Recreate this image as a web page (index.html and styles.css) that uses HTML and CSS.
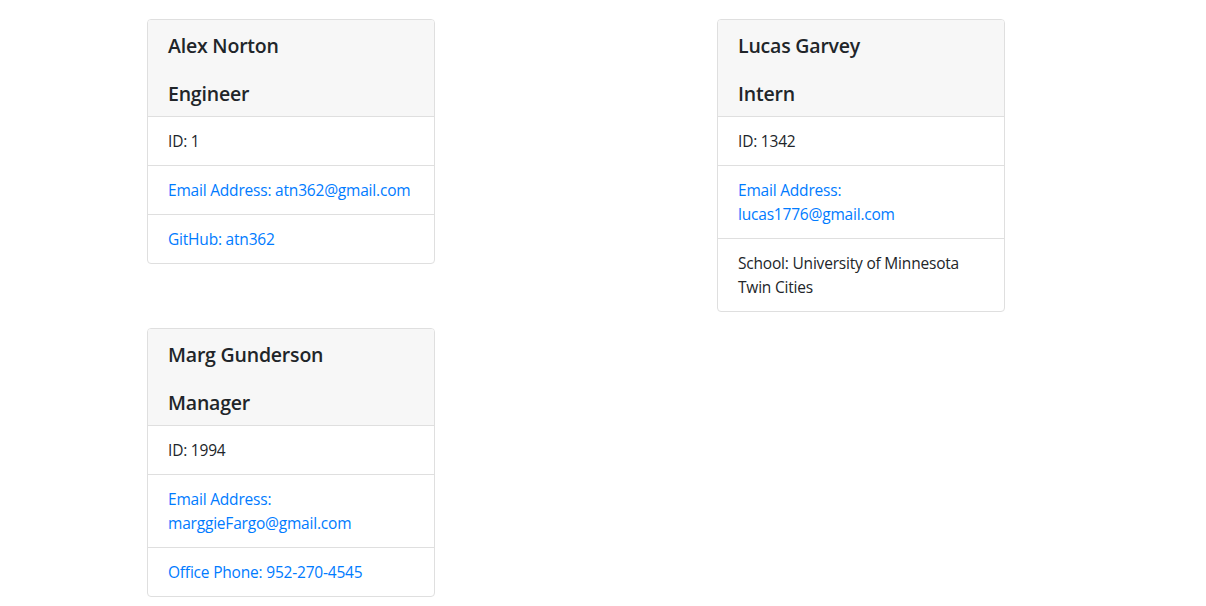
FILE: index.html
```html
<!DOCTYPE html>
<html lang="en">
<head>
<meta charset="utf-8">
<title>Team</title>
<link rel="stylesheet" href="styles.css">
</head>
<body>
<main class="team">
  <section class="card">
    <header class="card-header">
      <h2 class="card-title">Alex Norton</h2>
      <h3 class="card-title">Engineer</h3>
    </header>
    <ul class="list">
      <li class="item">ID: 1</li>
      <li class="item"><a class="link" href="#">Email Address: atn362@gmail.com</a></li>
      <li class="item"><a class="link" href="#">GitHub: atn362</a></li>
    </ul>
  </section>
  <section class="card">
    <header class="card-header">
      <h2 class="card-title">Lucas Garvey</h2>
      <h3 class="card-title">Intern</h3>
    </header>
    <ul class="list">
      <li class="item">ID: 1342</li>
      <li class="item"><a class="link" href="#">Email Address: lucas1776@gmail.com</a></li>
      <li class="item">School: University of Minnesota Twin Cities</li>
    </ul>
  </section>
  <section class="card">
    <header class="card-header">
      <h2 class="card-title">Marg Gunderson</h2>
      <h3 class="card-title">Manager</h3>
    </header>
    <ul class="list">
      <li class="item">ID: 1994</li>
      <li class="item"><a class="link" href="#">Email Address: marggieFargo@gmail.com</a></li>
      <li class="item"><a class="link" href="#">Office Phone: 952-270-4545</a></li>
    </ul>
  </section>
</main>
</body>
</html>
```
FILE: styles.css
```css
html, body {
  margin: 0;
  padding: 0;
  background: #fff;
}
body {
  font-family: "Open Sans", "Noto Sans", sans-serif;
  font-size: 15.5px;
  line-height: 24px;
  color: #212529;
  letter-spacing: -0.2px;
}
.team {
  display: grid;
  grid-template-columns: 570px 570px;
  align-items: start;
  row-gap: 16px;
  padding: 19px 0 0 147px;
}
.card {
  width: 288px;
  box-sizing: border-box;
  border: 1px solid #dfdfdf;
  border-radius: 4px;
  background: #fff;
  overflow: hidden;
}
.card-header {
  background: #f7f7f7;
  padding: 14px 20px 10px;
  border-bottom: 1px solid #dfdfdf;
  display: flex;
  flex-direction: column;
  gap: 24px;
}
.card-title {
  margin: 0;
  font-size: 19.5px;
  line-height: 24px;
  font-weight: 600;
  letter-spacing: -0.2px;
}
.list {
  list-style: none;
  margin: 0;
  padding: 0;
}
.item {
  padding: 12px 20px;
  border-top: 1px solid #dfdfdf;
}
.item:first-child {
  border-top: 0;
}
.link {
  color: #007bff;
  text-decoration: none;
}
```
